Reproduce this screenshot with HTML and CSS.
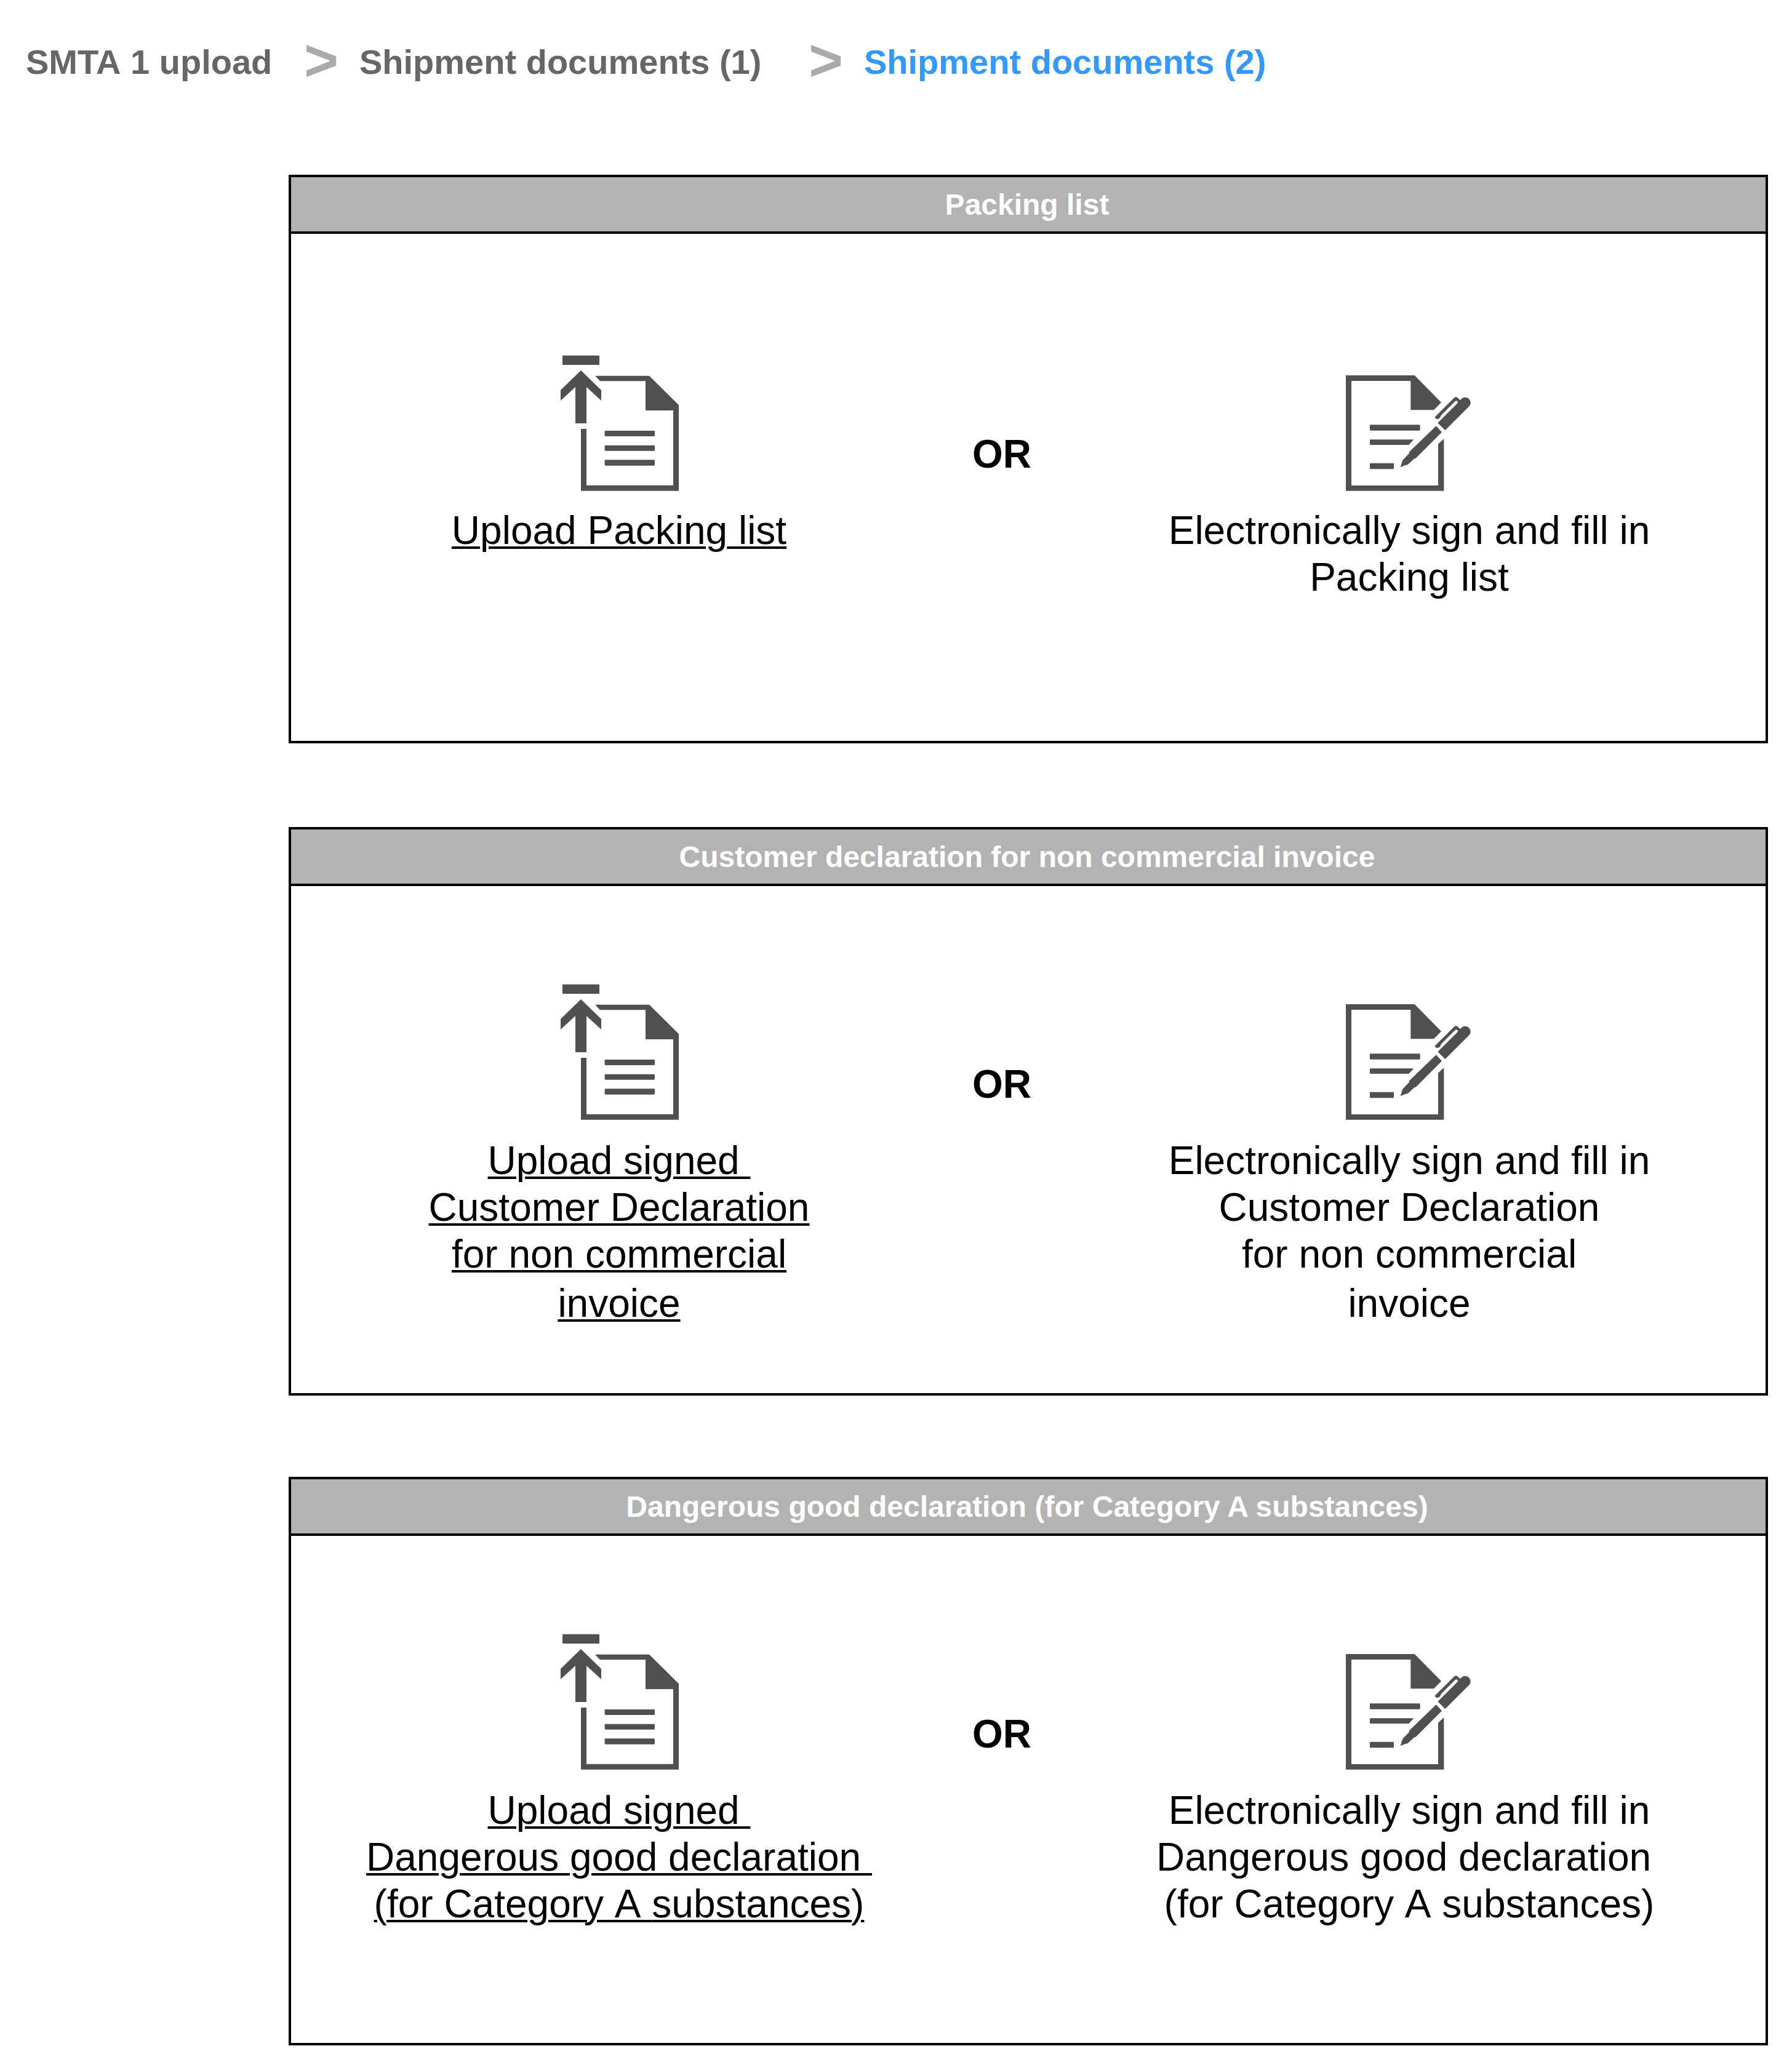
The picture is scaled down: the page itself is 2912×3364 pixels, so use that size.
FILE: index.html
```html
<!DOCTYPE html>
<html lang="en">
<head>
<meta charset="utf-8">
<title>Shipment documents (2)</title>
<link rel="stylesheet" href="styles.css">
</head>
<body>
<svg class="sprite" aria-hidden="true">
  <symbol id="icon-upload" viewBox="0 0 696 792">
    <rect x="72" y="53" width="180" height="46" rx="4"/>
    <path d="M162 126L261 222V273L189 207V384H135V207L63 273V222Z"/>
    <path d="M231 152H495L639 295V713H162V411H189V686H612V321H480Q477 321 477 318V178H255Z"/>
    <rect x="278" y="420" width="244" height="27" rx="4"/>
    <rect x="278" y="491" width="244" height="27" rx="4"/>
    <rect x="278" y="562" width="244" height="28" rx="4"/>
  </symbol>
  <symbol id="icon-sign" viewBox="0 -90 720 792">
    <path d="M51 60H386L516 192L480 229H367V90Q367 87 364 87H81Q78 87 78 90V594Q78 597 81 597H501V395L529 369V623H51Z"/>
    <rect x="168" y="301" width="245" height="28" rx="4"/>
    <path d="M172 373H382L358 399H172Q168 399 168 395V377Q168 373 172 373Z"/>
    <rect x="168" y="488" width="117" height="29" rx="4"/>
    <path d="M491 307L519 337L392 464L385 466L353 495L339 499L317 508L328 473L360 440L359 434Z"/>
    <path d="M499 292L535 328L650 213Q659 204 659 195C659 177 645 167 632 167Q618 167 608 181L597 170Q589 162 580 169L487 261Q484 267 489 271Q500 277 511 266Q514 256 520 250L585 185Q591 182 596 187Q599 192 594 197Z"/>
  </symbol>
</svg>

<nav class="steps">
  <span class="step">SMTA<span class="unkerned"> 1 </span>upload</span>
  <span class="chevron">&gt;</span>
  <span class="step step-second">Shipment documents (1)</span>
  <span class="chevron">&gt;</span>
  <span class="step step-current">Shipment documents (2)</span>
</nav>

<main class="panels">
  <section class="panel panel-first">
    <h2 class="panel-title">Packing list</h2>
    <div class="choices">
      <div class="choice">
        <svg class="icon icon-upload"><use href="#icon-upload"/></svg>
        <a class="label link">Upload Packing list</a>
      </div>
      <div class="or">OR</div>
      <div class="choice">
        <svg class="icon icon-sign"><use href="#icon-sign"/></svg>
        <div class="label">Electronically sign and fill in<br>Packing list</div>
      </div>
    </div>
  </section>

  <section class="panel panel-second">
    <h2 class="panel-title">Customer declaration for non commercial invoice</h2>
    <div class="choices">
      <div class="choice">
        <svg class="icon icon-upload"><use href="#icon-upload"/></svg>
        <a class="label link">Upload signed&nbsp;<br>Customer Declaration<br>for non commercial<span class="last-line">invoice</span></a>
      </div>
      <div class="or">OR</div>
      <div class="choice">
        <svg class="icon icon-sign"><use href="#icon-sign"/></svg>
        <div class="label">Electronically sign and fill in<br>Customer Declaration<br>for non commercial<span class="last-line">invoice</span></div>
      </div>
    </div>
  </section>

  <section class="panel">
    <h2 class="panel-title">Dangerous good declaration (for Category A substances)</h2>
    <div class="choices">
      <div class="choice">
        <svg class="icon icon-upload"><use href="#icon-upload"/></svg>
        <a class="label link">Upload signed&nbsp;<br>Dangerous good declaration&nbsp;<br>(for Category<span class="unkerned"> A </span>substances)</a>
      </div>
      <div class="or">OR</div>
      <div class="choice">
        <svg class="icon icon-sign"><use href="#icon-sign"/></svg>
        <div class="label">Electronically sign and fill in<br>Dangerous good declaration&nbsp;<br>(for Category<span class="unkerned"> A </span>substances)</div>
      </div>
    </div>
  </section>
</main>
</body>
</html>
```
FILE: styles.css
```css
* {
  box-sizing: border-box;
}

body {
  margin: 0;
  background: #fff;
  color: #000;
  font-family: "Liberation Sans", Arial, sans-serif;
}

.sprite {
  display: none;
}

.unkerned {
  font-kerning: none;
}

/* Step trail */
.steps {
  display: flex;
  align-items: flex-start;
  height: 284px;
  padding: 67px 0 0 42px;
  font-weight: bold;
  white-space: nowrap;
}

.step {
  width: 452px;
  color: #666;
  font-size: 56px;
  line-height: 68px;
}

.step-second {
  width: 730px;
}

.step-current {
  width: auto;
  color: #39f;
}

.chevron {
  width: 90px;
  margin-top: -23px;
  color: #aaa;
  font-size: 96px;
  line-height: 108px;
}

/* Document panels */
.panels {
  width: 2404px;
  margin-left: 469px;
}

.panel {
  height: 924px;
  border: 4px solid #000;
}

.panel-first {
  margin-bottom: 136px;
}

.panel-second {
  margin-bottom: 132px;
}

.panel-title {
  height: 92px;
  margin: 0;
  padding-right: 4px;
  border-bottom: 4px solid #000;
  background: #b3b3b3;
  color: #fff;
  font-size: 48px;
  font-weight: bold;
  line-height: 90px;
  text-align: center;
}

.choices {
  display: grid;
  grid-template-columns: 1066px 180px 1142px;
  padding-top: 142px;
}

.panel-first .choices {
  padding-top: 180px;
}

.choice {
  display: flex;
  flex-direction: column;
  align-items: center;
}

.icon {
  display: block;
  height: 264px;
  margin-bottom: 2px;
  fill: #505050;
}

.panel-first .icon {
  margin-bottom: 0;
}

.icon-upload {
  width: 232px;
}

.icon-sign {
  width: 240px;
}

.label {
  font-size: 64px;
  line-height: 76px;
  text-align: center;
  white-space: nowrap;
}

.link {
  text-decoration: underline;
  text-decoration-thickness: 4px;
  text-underline-offset: 4px;
}

.last-line {
  display: block;
  padding-top: 4px;
}

.or {
  padding: 142px 2px 0 0;
  font-size: 64px;
  font-weight: bold;
  line-height: 76px;
  text-align: center;
}

.panel-first .or {
  padding-top: 140px;
}
```
